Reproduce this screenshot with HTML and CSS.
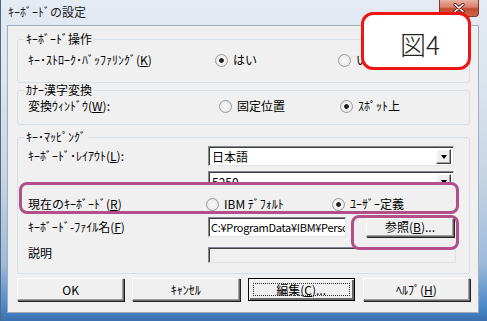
FILE: index.html
```html
<!DOCTYPE html>
<html lang="ja">
<head>
<meta charset="utf-8">
<title>キーボードの設定</title>
<link rel="stylesheet" href="styles.css">
</head>
<body>
<div class="window">
  <div class="titlebar">
    <span class="title">ｷｰﾎﾞｰﾄﾞの設定</span>
    <span class="close"><svg width="14" height="10" viewBox="0 0 14 10"><path d="M3 1.5 L11 8.5 M11 1.5 L3 8.5" stroke="#5a1e14" stroke-width="3.2" stroke-linecap="round"/><path d="M3 1.5 L11 8.5 M11 1.5 L3 8.5" stroke="#fff" stroke-width="1.6" stroke-linecap="round"/></svg></span>
  </div>
  <div class="client">
    <fieldset class="group g1">
      <legend>ｷｰﾎﾞｰﾄﾞ操作</legend>
      <div class="row r1">
        <span class="lbl">ｷｰ･ｽﾄﾛｰｸ･ﾊﾞｯﾌｧﾘﾝｸﾞ(<u>K</u>)</span>
        <span class="radio on">はい</span>
        <span class="radio">いいえ</span>
      </div>
    </fieldset>
    <fieldset class="group g2">
      <legend>ｶﾅｰ漢字変換</legend>
      <div class="row r2">
        <span class="lbl">変換ｳｨﾝﾄﾞｳ(<u>W</u>):</span>
        <span class="radio">固定位置</span>
        <span class="radio on">ｽﾎﾟｯﾄ上</span>
      </div>
    </fieldset>
    <fieldset class="group g3">
      <legend>ｷｰ･ﾏｯﾋﾟﾝｸﾞ</legend>
      <div class="map">
        <span class="lbl">ｷｰﾎﾞｰﾄﾞ･ﾚｲｱｳﾄ(<u>L</u>):</span>
        <div class="combo"><span class="val">日本語</span><span class="drop"></span></div>
        <span class="lbl"></span>
        <div class="combo"><span class="val">5250</span><span class="drop"></span></div>
        <span class="lbl">現在のｷｰﾎﾞｰﾄﾞ(<u>R</u>)</span>
        <div class="radios">
          <span class="radio">IBM ﾃﾞﾌｫﾙﾄ</span>
          <span class="radio on">ﾕｰｻﾞｰ定義</span>
        </div>
        <span class="lbl">ｷｰﾎﾞｰﾄﾞ-ﾌｧｲﾙ名(<u>F</u>)</span>
        <div class="filerow">
          <div class="edit"><span class="val">C:¥ProgramData¥IBM¥Personal Communications¥ibm5250.kmp</span></div>
          <span class="btn small">参照(<u>B</u>)...</span>
        </div>
        <span class="lbl">説明</span>
        <div class="edit desc"></div>
      </div>
    </fieldset>
    <div class="buttons">
      <span class="btn">OK</span>
      <span class="btn">ｷｬﾝｾﾙ</span>
      <span class="btn default"><span class="focus">編集(<u>C</u>)...</span></span>
      <span class="btn">ﾍﾙﾌﾟ(<u>H</u>)</span>
    </div>
  </div>
  <div class="fig">図4</div>
  <div class="hl hl1"></div>
  <div class="hl hl2"></div>
</div>
</body>
</html>
```

FILE: styles.css
```css
* { box-sizing: border-box; }
html, body { margin: 0; padding: 0; }
body {
  width: 487px;
  height: 321px;
  overflow: hidden;
  font-family: "Noto Sans CJK JP", "Noto Sans", sans-serif;
  font-size: 12px;
  color: #000;
  background: #fff;
}
u { text-decoration: underline; text-underline-offset: 1px; }

.window {
  position: relative;
  width: 487px;
  height: 321px;
  display: flex;
  flex-direction: column;
  padding: 0 8px 8px 6px;
  border-left: 1px solid #56687e;
  background: linear-gradient(180deg, #e4ebf3 0%, #dce4ee 25%, #c7d5e4 55%, #9dbbdb 82%, #4a86c8 96%, #3a6fae 100%);
}

.titlebar {
  height: 25px;
  flex: none;
  display: flex;
  justify-content: space-between;
  align-items: flex-start;
}
.title {
  margin-top: 4px;
  padding-left: 1px;
  line-height: 16px;
  color: #1a1a1a;
}
.close {
  width: 40px;
  height: 17px;
  display: flex;
  align-items: center;
  justify-content: center;
  border: 1px solid #7a3a2c;
  border-top: none;
  border-radius: 0 0 4px 4px;
  background: linear-gradient(180deg, #e9b1a3 0%, #d77f69 45%, #c24a2e 55%, #d0644a 100%);
}

.client {
  flex: 1;
  min-height: 0;
  display: flex;
  flex-direction: column;
  background: #f0f0f0;
  border: 1px solid #9fadbd;
  padding: 0 8px 0 9px;
}

.group {
  margin: 0;
  min-width: 0;
  border: 1px solid #d5dfe5;
  border-radius: 3px;
  padding: 0 15px 0 10px;
}
.group legend {
  margin-left: -4px;
  padding: 0 2px;
  line-height: 14px;
}
.g1 { margin-top: 6px; padding-top: 6px; padding-bottom: 14px; }
.g2 { margin-top: 0; padding-top: 1px; padding-bottom: 10px; }
.g3 { margin-top: 5px; padding-top: 2px; padding-bottom: 10px; }

.row {
  display: grid;
  align-items: center;
  height: 16px;
  line-height: 16px;
}
.r1 { grid-template-columns: 187px 123px minmax(0, 1fr); }
.r2 { grid-template-columns: 191px 121px minmax(0, 1fr); }

.lbl { white-space: nowrap; line-height: 16px; }

.radio {
  display: flex;
  align-items: center;
  gap: 5px;
  white-space: nowrap;
  line-height: 16px;
}
.radio::before {
  content: "";
  flex: none;
  width: 11px;
  height: 11px;
  border-radius: 50%;
  border: 1px solid #9a9a9a;
  background: radial-gradient(circle at 50% 50%, #fafafa 0, #e2e2e2 100%);
}
.radio.on::before {
  background: radial-gradient(circle at 50% 50%, #1e1e1e 0 2px, #f4f4f4 2.6px, #e2e2e2 100%);
}

.map {
  display: grid;
  grid-template-columns: 180px minmax(0, 1fr);
  align-items: center;
  row-gap: 5px;
}
.combo {
  height: 20px;
  min-width: 0;
  display: flex;
  align-items: center;
  background: #fff;
  border: 1px solid;
  border-color: #828790 #e3e3e3 #e3e3e3 #828790;
  box-shadow: inset 1px 1px 0 #404040;
  padding: 1px 2px 0 3px;
}
.combo .val { flex: 1; line-height: 16px; }
.drop {
  width: 15px;
  height: 15px;
  flex: none;
  background: #f0f0f0;
  border: 1px solid;
  border-color: #fff #404040 #404040 #fff;
  box-shadow: inset -1px -1px 0 #a0a0a0;
  display: flex;
  align-items: center;
  justify-content: center;
}
.drop::after {
  content: "";
  border-left: 3.5px solid transparent;
  border-right: 3.5px solid transparent;
  border-top: 4px solid #000;
}
.radios {
  display: grid;
  grid-template-columns: 126px minmax(0, 1fr);
  margin-left: -2px;
  height: 16px;
}
.filerow {
  display: flex;
  align-items: center;
  gap: 20px;
  min-width: 0;
}
.edit {
  height: 20px;
  flex: 1;
  min-width: 0;
  overflow: hidden;
  display: flex;
  align-items: center;
  background: #fff;
  border: 1px solid;
  border-color: #828790 #e3e3e3 #e3e3e3 #828790;
  box-shadow: inset 1px 1px 0 #404040;
  padding: 0 2px;
}
.edit .val {
  white-space: nowrap;
  line-height: 16px;
  font-size: 11px;
  letter-spacing: -0.3px;
}
.desc {
  height: 16px;
  margin-top: 5px;
  background: #f0f0f0;
  margin-right: -2px;
}

.btn {
  display: flex;
  align-items: center;
  justify-content: center;
  height: 23px;
  background: #f0f0f0;
  border: 1px solid;
  border-color: #fff #696969 #696969 #fff;
  box-shadow: inset -1px -1px 0 #a0a0a0, 1px 1px 0 #222;
  line-height: 16px;
  white-space: nowrap;
}
.btn.small { width: 88px; height: 19px; flex: none; }
.buttons {
  display: flex;
  gap: 8px;
  margin-top: 4px;
}
.buttons .btn { flex: 1; }
.btn.default {
  border: 1px solid #000;
  box-shadow: inset 1px 1px 0 #fff, inset -2px -2px 0 #696969;
}
.focus {
  display: flex;
  align-items: center;
  justify-content: center;
  width: calc(100% - 8px);
  height: calc(100% - 8px);
  border: 1px dotted #333;
}

.fig {
  position: absolute;
  left: 360px;
  top: 12px;
  width: 110px;
  height: 58px;
  border: 3px solid #ee1515;
  border-radius: 12px;
  background: #fff;
  display: flex;
  align-items: center;
  justify-content: center;
  padding: 6px 0 0 8px;
  font-size: 26px;
  line-height: 30px;
  color: #222;
  font-weight: 300;
}
.hl {
  position: absolute;
  border: 3px solid #b24f88;
  border-radius: 8px;
}
.hl1 {
  left: 18px;
  top: 182px;
  width: 440px;
  height: 32px;
  background: linear-gradient(180deg, #f0f0f0 0 7px, transparent 7px);
}
.hl2 {
  left: 350px;
  top: 215px;
  width: 108px;
  height: 35px;
}
```
